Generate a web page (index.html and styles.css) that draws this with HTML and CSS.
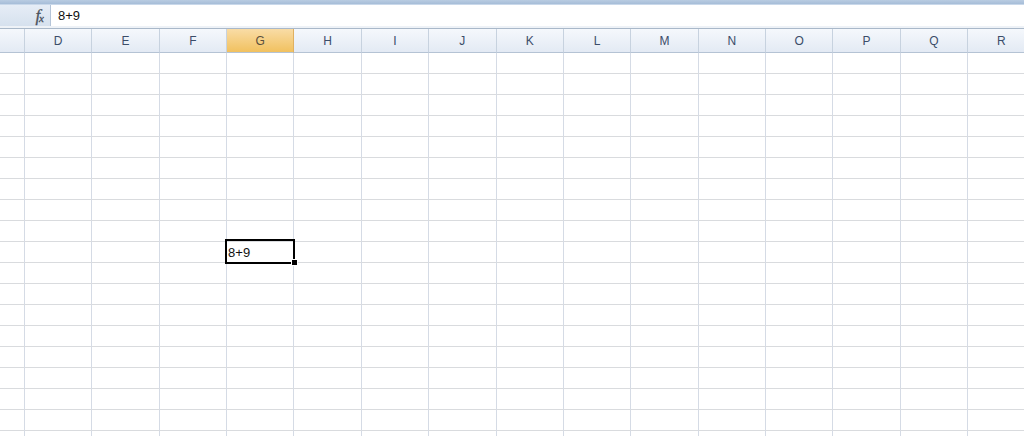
FILE: index.html
```html
<!DOCTYPE html>
<html>
<head>
<meta charset="utf-8">
<link rel="stylesheet" href="styles.css">
</head>
<body>
<div class="app">
  <div class="topband"></div>
  <div class="formula-bar">
    <div class="fx-box"><span class="fx"><i>f</i><sub>x</sub></span></div>
    <div class="formula-input">8+9</div>
  </div>
  <div class="bar-gap"></div>
  <div class="sheet">
    <div class="hd"></div><div class="hd">D</div><div class="hd">E</div><div class="hd">F</div><div class="hd active">G</div><div class="hd">H</div><div class="hd">I</div><div class="hd">J</div><div class="hd">K</div><div class="hd">L</div><div class="hd">M</div><div class="hd">N</div><div class="hd">O</div><div class="hd">P</div><div class="hd">Q</div><div class="hd">R</div>
    <div class="c"></div><div class="c"></div><div class="c"></div><div class="c"></div><div class="c"></div><div class="c"></div><div class="c"></div><div class="c"></div><div class="c"></div><div class="c"></div><div class="c"></div><div class="c"></div><div class="c"></div><div class="c"></div><div class="c"></div><div class="c"></div>
    <div class="c"></div><div class="c"></div><div class="c"></div><div class="c"></div><div class="c"></div><div class="c"></div><div class="c"></div><div class="c"></div><div class="c"></div><div class="c"></div><div class="c"></div><div class="c"></div><div class="c"></div><div class="c"></div><div class="c"></div><div class="c"></div>
    <div class="c"></div><div class="c"></div><div class="c"></div><div class="c"></div><div class="c"></div><div class="c"></div><div class="c"></div><div class="c"></div><div class="c"></div><div class="c"></div><div class="c"></div><div class="c"></div><div class="c"></div><div class="c"></div><div class="c"></div><div class="c"></div>
    <div class="c"></div><div class="c"></div><div class="c"></div><div class="c"></div><div class="c"></div><div class="c"></div><div class="c"></div><div class="c"></div><div class="c"></div><div class="c"></div><div class="c"></div><div class="c"></div><div class="c"></div><div class="c"></div><div class="c"></div><div class="c"></div>
    <div class="c"></div><div class="c"></div><div class="c"></div><div class="c"></div><div class="c"></div><div class="c"></div><div class="c"></div><div class="c"></div><div class="c"></div><div class="c"></div><div class="c"></div><div class="c"></div><div class="c"></div><div class="c"></div><div class="c"></div><div class="c"></div>
    <div class="c"></div><div class="c"></div><div class="c"></div><div class="c"></div><div class="c"></div><div class="c"></div><div class="c"></div><div class="c"></div><div class="c"></div><div class="c"></div><div class="c"></div><div class="c"></div><div class="c"></div><div class="c"></div><div class="c"></div><div class="c"></div>
    <div class="c"></div><div class="c"></div><div class="c"></div><div class="c"></div><div class="c"></div><div class="c"></div><div class="c"></div><div class="c"></div><div class="c"></div><div class="c"></div><div class="c"></div><div class="c"></div><div class="c"></div><div class="c"></div><div class="c"></div><div class="c"></div>
    <div class="c"></div><div class="c"></div><div class="c"></div><div class="c"></div><div class="c"></div><div class="c"></div><div class="c"></div><div class="c"></div><div class="c"></div><div class="c"></div><div class="c"></div><div class="c"></div><div class="c"></div><div class="c"></div><div class="c"></div><div class="c"></div>
    <div class="c"></div><div class="c"></div><div class="c"></div><div class="c"></div><div class="c"></div><div class="c"></div><div class="c"></div><div class="c"></div><div class="c"></div><div class="c"></div><div class="c"></div><div class="c"></div><div class="c"></div><div class="c"></div><div class="c"></div><div class="c"></div>
    <div class="c"></div><div class="c"></div><div class="c"></div><div class="c"></div><div class="c selected">8+9<span class="sel-box"></span><span class="fill-handle"></span></div><div class="c"></div><div class="c"></div><div class="c"></div><div class="c"></div><div class="c"></div><div class="c"></div><div class="c"></div><div class="c"></div><div class="c"></div><div class="c"></div><div class="c"></div>
    <div class="c"></div><div class="c"></div><div class="c"></div><div class="c"></div><div class="c"></div><div class="c"></div><div class="c"></div><div class="c"></div><div class="c"></div><div class="c"></div><div class="c"></div><div class="c"></div><div class="c"></div><div class="c"></div><div class="c"></div><div class="c"></div>
    <div class="c"></div><div class="c"></div><div class="c"></div><div class="c"></div><div class="c"></div><div class="c"></div><div class="c"></div><div class="c"></div><div class="c"></div><div class="c"></div><div class="c"></div><div class="c"></div><div class="c"></div><div class="c"></div><div class="c"></div><div class="c"></div>
    <div class="c"></div><div class="c"></div><div class="c"></div><div class="c"></div><div class="c"></div><div class="c"></div><div class="c"></div><div class="c"></div><div class="c"></div><div class="c"></div><div class="c"></div><div class="c"></div><div class="c"></div><div class="c"></div><div class="c"></div><div class="c"></div>
    <div class="c"></div><div class="c"></div><div class="c"></div><div class="c"></div><div class="c"></div><div class="c"></div><div class="c"></div><div class="c"></div><div class="c"></div><div class="c"></div><div class="c"></div><div class="c"></div><div class="c"></div><div class="c"></div><div class="c"></div><div class="c"></div>
    <div class="c"></div><div class="c"></div><div class="c"></div><div class="c"></div><div class="c"></div><div class="c"></div><div class="c"></div><div class="c"></div><div class="c"></div><div class="c"></div><div class="c"></div><div class="c"></div><div class="c"></div><div class="c"></div><div class="c"></div><div class="c"></div>
    <div class="c"></div><div class="c"></div><div class="c"></div><div class="c"></div><div class="c"></div><div class="c"></div><div class="c"></div><div class="c"></div><div class="c"></div><div class="c"></div><div class="c"></div><div class="c"></div><div class="c"></div><div class="c"></div><div class="c"></div><div class="c"></div>
    <div class="c"></div><div class="c"></div><div class="c"></div><div class="c"></div><div class="c"></div><div class="c"></div><div class="c"></div><div class="c"></div><div class="c"></div><div class="c"></div><div class="c"></div><div class="c"></div><div class="c"></div><div class="c"></div><div class="c"></div><div class="c"></div>
    <div class="c"></div><div class="c"></div><div class="c"></div><div class="c"></div><div class="c"></div><div class="c"></div><div class="c"></div><div class="c"></div><div class="c"></div><div class="c"></div><div class="c"></div><div class="c"></div><div class="c"></div><div class="c"></div><div class="c"></div><div class="c"></div>
    <div class="c"></div><div class="c"></div><div class="c"></div><div class="c"></div><div class="c"></div><div class="c"></div><div class="c"></div><div class="c"></div><div class="c"></div><div class="c"></div><div class="c"></div><div class="c"></div><div class="c"></div><div class="c"></div><div class="c"></div><div class="c"></div>
  </div>
</div>
</body>
</html>
```

FILE: styles.css
```css
html, body {
  margin: 0;
  padding: 0;
  background: #ffffff;
  overflow: hidden;
}

.app {
  width: 1024px;
  height: 436px;
  overflow: hidden;
  font-family: "Liberation Sans", Arial, sans-serif;
}

.topband {
  height: 4px;
  background: linear-gradient(#b9cce2, #a6bdd8);
  border-bottom: 1px solid #c9d8ea;
}

.formula-bar {
  display: flex;
  height: 21px;
}

.fx-box {
  width: 51px;
  background: linear-gradient(#e6edf6, #d6e1ee);
  border-right: 1px solid #b4c4d8;
  display: flex;
  align-items: center;
  justify-content: flex-end;
  padding-right: 7px;
  box-sizing: border-box;
}

.fx {
  font-family: "Liberation Serif", "Times New Roman", serif;
  color: #4a525d;
  font-size: 17px;
  line-height: 1;
  letter-spacing: -1px;
  -webkit-text-stroke: 0.3px #4a525d;
}

.fx i {
  font-style: italic;
}

.fx sub {
  font-size: 11px;
  font-style: italic;
  vertical-align: -1px;
}

.formula-input {
  flex: 1;
  background: #ffffff;
  padding-left: 7px;
  font-size: 13px;
  line-height: 22px;
  color: #111111;
}

.bar-gap {
  height: 2px;
  background: #eef2f7;
  border-bottom: 1px solid #a9b8c9;
}

.sheet {
  display: grid;
  grid-template-columns: 25px repeat(15, 67.36px);
  grid-template-rows: 24px;
  grid-auto-rows: 21px;
}

.hd {
  box-sizing: border-box;
  background: linear-gradient(#f5f8fc, #e3eaf4);
  border-right: 1px solid #c7d2df;
  border-bottom: 1px solid #b5c3d4;
  color: #3b4d69;
  font-size: 12px;
  display: flex;
  align-items: center;
  justify-content: center;
}

.hd.active {
  background: linear-gradient(#f9dca6, #f1c15f);
  border-right-color: #e0b060;
  color: #5a4f3c;
}

.c {
  box-sizing: border-box;
  border-right: 1px solid #d5dbe5;
  border-bottom: 1px solid #d9dbde;
  font-size: 13px;
  color: #111111;
  line-height: 22px;
  padding-left: 1px;
}

.c.selected {
  position: relative;
}

.sel-box {
  position: absolute;
  top: -3px;
  left: -2px;
  width: 70px;
  height: 25px;
  border: 2px solid #000000;
  box-sizing: border-box;
}

.fill-handle {
  position: absolute;
  right: -5px;
  bottom: -4px;
  width: 5px;
  height: 5px;
  background: #000000;
  border: 1px solid #ffffff;
}
```
